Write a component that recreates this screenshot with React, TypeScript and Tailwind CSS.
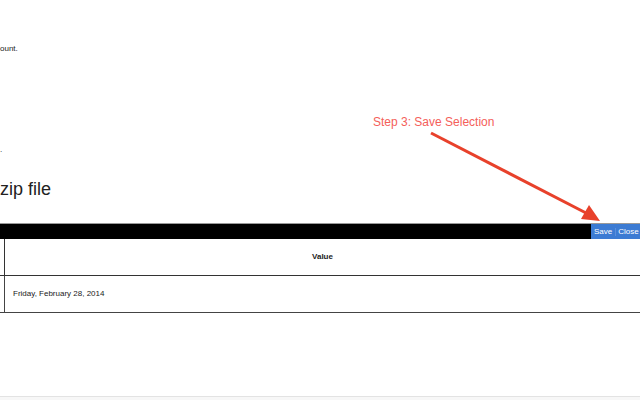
import React from "react";

export default function App() {
  return (
    <div
      className="relative flex h-[400px] w-[640px] flex-col overflow-hidden bg-white text-[#222]"
      style={{ fontFamily: '"Liberation Sans", Arial, sans-serif' }}
    >
      <p className="mt-[44px] text-[8px] leading-[10px]">ount.</p>
      <p className="mt-[91px] text-[8px] leading-[10px]">.</p>
      <h2 className="mt-[23px] text-[18px] leading-[22px] font-normal">zip file</h2>

      {/* toolbar */}
      <div className="mt-[23px] flex h-[16px] border-t border-[#999]">
        <div className="flex-1 bg-black" />
        <div className="flex w-[49px] items-center bg-[#3c7bd3] text-[8px] leading-none text-white">
          <span className="pl-[3px] pr-[3px]">Save</span>
          <span className="border-l border-[#5a8fdc] pl-[2px]">Close</span>
        </div>
      </div>

      {/* table */}
      <div className="grid grid-cols-[5px_1fr] text-[8px] leading-none">
        <div className="h-[37px] border-r border-b border-[#333]" />
        <div className="flex h-[37px] items-center justify-center border-b border-[#333] font-semibold">
          Value
        </div>
        <div className="h-[37px] border-r border-b border-[#444]" />
        <div className="flex h-[37px] items-center border-b border-[#444] pl-[8px]">
          Friday, February 28, 2014
        </div>
      </div>

      <div className="mt-auto h-[4px] border-t border-[#e3e3e3] bg-[#f7f7f7]" />

      {/* annotation */}
      <div className="absolute left-[373px] top-[115px] text-[12px] leading-[14px] text-[#f4605a]">
        Step 3: Save Selection
      </div>
      <svg className="absolute left-0 top-0" width="640" height="400" viewBox="0 0 640 400">
        <line x1="431" y1="133" x2="588" y2="214" stroke="#e8412b" strokeWidth="3" />
        <polygon points="600,221 581,219 589,205" fill="#e8412b" />
      </svg>
    </div>
  );
}
